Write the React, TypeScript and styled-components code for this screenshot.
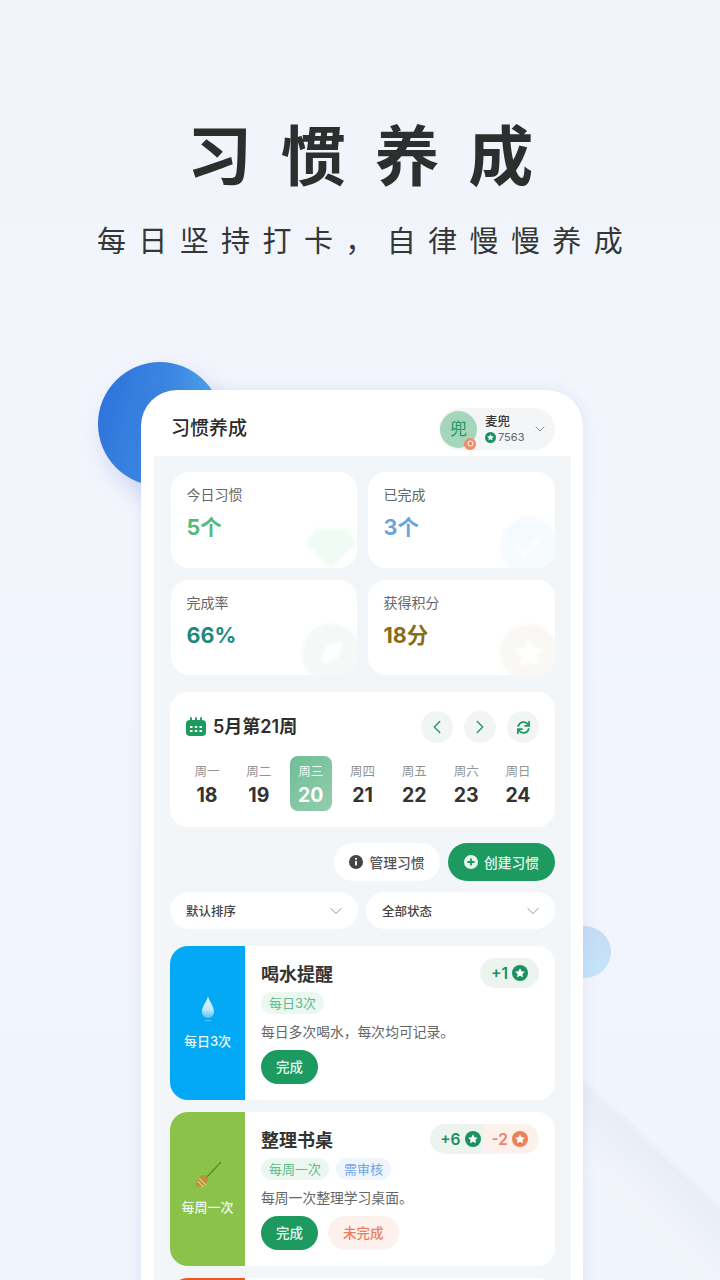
import React from 'react'
import styled, { createGlobalStyle } from 'styled-components'
import { ChevronDown, ChevronLeft, ChevronRight } from 'lucide-react'
import { FaSync } from 'react-icons/fa'

const GlobalStyle = createGlobalStyle`
  html, body {
    margin: 0;
    padding: 0;
    background: #f1f4fc;
  }
  * {
    box-sizing: border-box;
  }
`

const PageStyles = styled.div`
  position: relative;
  width: 720px;
  height: 1280px;
  overflow: hidden;
  padding-top: 122px;
  font-family: Inter, 'Noto Sans CJK SC', sans-serif;
  color: #333;
  background: linear-gradient(180deg, #f0f3f9 0, #f1f4fb 40px, #f2f5fc 45%, #f0f4fd 100%);
`

const HeroTitle = styled.h1`
  margin: 0;
  height: 70px;
  font-size: 65px;
  line-height: 70px;
  font-weight: 700;
  letter-spacing: 28.800px;
  text-align: center;
  padding-left: 29px;
  color: #2b2f2d;
  white-space: nowrap;
`

const HeroSub = styled.p`
  margin: 32px 0 0;
  font-size: 29px;
  line-height: 36px;
  font-weight: 400;
  letter-spacing: 12.400px;
  text-align: center;
  padding-left: 12px;
  color: #333836;
  white-space: nowrap;
`

const BigBall = styled.div`
  position: absolute;
  left: 98px;
  top: 362px;
  width: 124px;
  height: 124px;
  border-radius: 50%;
  background: linear-gradient(105deg, #2c70d9 0%, #3d88e3 50%, #5cb5ee 100%);
  box-shadow: 6px 12px 22px rgba(100, 110, 220, 0.22);
`

const SmallBall = styled.div`
  position: absolute;
  left: 557px;
  top: 926px;
  width: 54px;
  height: 52px;
  border-radius: 50%;
  background: linear-gradient(180deg, #c6dcf6 0%, #c4e4f9 100%);
`

const CornerFold = styled.div`
  position: absolute;
  left: 570px;
  top: 1080px;
  width: 150px;
  height: 200px;
  background: linear-gradient(222.8deg, rgba(232, 236, 246, 0) 36%, #e9edf6 39%, #f1f4fb 60%, rgba(241, 244, 251, 0) 78%);
`

const PhoneCard = styled.div`
  position: relative;
  width: 442px;
  height: 960px;
  margin: 130px 0 0 141px;
  padding: 0 12px 0 13px;
  background: #fff;
  border-radius: 36px 36px 0 0;
  box-shadow: 0 0 14px rgba(60, 90, 170, 0.1);
`

const AppHeader = styled.div`
  display: flex;
  align-items: center;
  justify-content: space-between;
  height: 66px;
  padding: 18px 16px 6px 17px;
`

const AppTitle = styled.div`
  font-size: 19px;
  line-height: 26px;
  font-weight: 500;
  color: #2a2a2a;
`

const UserChip = styled.div`
  display: flex;
  align-items: center;
  width: 116px;
  height: 42px;
  border-radius: 21px;
  background: #f3f5f6;
`

const Avatar = styled.div`
  position: relative;
  flex: none;
  width: 37px;
  height: 37px;
  margin-left: 1px;
  border-radius: 50%;
  background: #a5d6bb;
  color: #1d9a5c;
  font-size: 17px;
  line-height: 37px;
  text-align: center;
`

const AvatarBadge = styled.span`
  position: absolute;
  right: 1px;
  bottom: -2px;
  display: flex;
  align-items: center;
  justify-content: center;
  width: 12px;
  height: 12px;
  border-radius: 50%;
  background: #f28a64;
`

const UserInfo = styled.div`
  display: flex;
  flex-direction: column;
  margin: 1px 0 0 8px;
  flex: 1;
`

const UserName = styled.div`
  font-size: 12.5px;
  line-height: 16px;
  font-weight: 500;
  color: #333;
`

const UserPoints = styled.div`
  display: flex;
  align-items: center;
  gap: 2px;
  font-size: 11px;
  line-height: 15px;
  color: #666;
`

const ChipArrow = styled(ChevronDown)`
  margin-right: 7px;
  color: #888;
`

const Content = styled.div`
  height: 894px;
  padding: 16px 16px 0 16px;
  background: #f3f6f8;
`

const StatGrid = styled.div`
  display: grid;
  grid-template-columns: 186px 187px;
  grid-template-rows: 96px 95px;
  column-gap: 11px;
  row-gap: 12px;
  margin-left: 1px;
`

const StatTile = styled.div`
  position: relative;
  overflow: hidden;
  padding: 13px 15.500px;
  background: #fff;
  border-radius: 18px;
`

const StatLabel = styled.div`
  font-size: 14px;
  line-height: 20px;
  color: #666;
`

const StatValue = styled.div<{ $color: string }>`
  margin-top: 7px;
  font-size: 21.5px;
  line-height: 30px;
  font-weight: 700;
  color: ${({ $color }) => $color};
`

const StatDecor = styled.div<{ $bg: string; $fg: string }>`
  position: absolute;
  right: -3px;
  bottom: -7px;
  width: 58px;
  height: 58px;
  border-radius: 50%;
  display: flex;
  align-items: center;
  justify-content: center;
  filter: blur(1.500px);
  background: ${({ $bg }) => $bg};
  color: ${({ $fg }) => $fg};
`

const WeekCard = styled.div`
  margin-top: 17px;
  height: 135px;
  padding: 18px 16px 0 16px;
  background: #fff;
  border-radius: 18px;
`

const WeekHeader = styled.div`
  display: flex;
  align-items: center;
  height: 34px;
`

const WeekTitle = styled.div`
  flex: 1;
  margin-left: 7px;
  font-size: 18px;
  line-height: 26px;
  font-weight: 600;
  color: #2e2e2e;
`

const RoundButton = styled.div`
  display: flex;
  align-items: center;
  justify-content: center;
  width: 32px;
  height: 32px;
  margin-left: 11px;
  border-radius: 50%;
  background: #f1f5f3;
  color: #1f9a60;
`

const DaysRow = styled.div`
  display: grid;
  grid-template-columns: repeat(7, 42px);
  justify-content: space-between;
  margin-top: 12px;
`

const DayCell = styled.div<{ $active?: boolean }>`
  height: 55px;
  padding-top: 8px;
  border-radius: 8px;
  text-align: center;
  background: ${({ $active }) => ($active ? 'linear-gradient(135deg, #6fbe95, #93cdae)' : 'transparent')};
  color: ${({ $active }) => ($active ? '#fff' : '#333')};
`

const DayName = styled.div<{ $active?: boolean }>`
  font-size: 12.5px;
  line-height: 16px;
  color: ${({ $active }) => ($active ? '#eef8f2' : '#939393')};
`

const DayNum = styled.div`
  margin-top: 2px;
  font-size: 19.500px;
  line-height: 26px;
  font-weight: 700;
`

const ActionRow = styled.div`
  display: flex;
  justify-content: flex-end;
  gap: 8px;
  margin-top: 16px;
`

const ActionButton = styled.div<{ $primary?: boolean }>`
  display: flex;
  align-items: center;
  justify-content: center;
  gap: 6px;
  height: 38px;
  border-radius: 19px;
  font-size: 13.75px;
  font-weight: 500;
  background: ${({ $primary }) => ($primary ? '#1c9a5f' : '#fff')};
  color: ${({ $primary }) => ($primary ? '#e8f6ee' : '#555')};
  width: ${({ $primary }) => ($primary ? '107px' : '106px')};
`

const FilterRow = styled.div`
  display: grid;
  grid-template-columns: 188px 189px;
  justify-content: space-between;
  margin-top: 11px;
`

const FilterSelect = styled.div`
  display: flex;
  align-items: center;
  justify-content: space-between;
  height: 37px;
  padding: 0 12px 0 16px;
  border-radius: 19px;
  background: #fff;
  font-size: 12.5px;
  font-weight: 500;
  color: #444;
`

const HabitList = styled.div`
  display: flex;
  flex-direction: column;
  gap: 12px;
  margin-top: 17px;
`

const HabitCard = styled.div`
  display: flex;
  height: 154px;
  background: #fff;
  border-radius: 18px;
  overflow: hidden;
  flex: none;
`

const HabitSide = styled.div<{ $color: string }>`
  display: flex;
  flex-direction: column;
  align-items: center;
  flex: none;
  width: 75px;
  padding-top: 49px;
  background: ${({ $color }) => $color};
`

const SideIcon = styled.div`
  display: flex;
  align-items: center;
  justify-content: center;
  height: 28px;
`

const SideLabel = styled.div`
  margin-top: 9px;
  font-size: 13px;
  line-height: 18px;
  font-weight: 500;
  color: #f0f8f4;
`

const HabitBody = styled.div`
  position: relative;
  flex: 1;
  padding: 15px 16px 0 16px;
`

const HabitName = styled.div`
  font-size: 18px;
  line-height: 28px;
  font-weight: 600;
  color: #333;
`

const TagRow = styled.div`
  display: flex;
  gap: 7px;
  margin-top: 3px;
`

const Tag = styled.span<{ $blue?: boolean }>`
  height: 22px;
  padding: 0 8px;
  border-radius: 11px;
  font-size: 13px;
  line-height: 22px;
  background: ${({ $blue }) => ($blue ? '#eff5fd' : '#edf7f1')};
  color: ${({ $blue }) => ($blue ? '#6fa6e6' : '#5cbb88')};
`

const HabitDesc = styled.div`
  margin-top: 8px;
  font-size: 13.800px;
  line-height: 20px;
  color: #666;
`

const HabitActions = styled.div`
  display: flex;
  gap: 10px;
  margin-top: 8px;
`

const DoneButton = styled.div<{ $miss?: boolean }>`
  height: 34px;
  padding: 0 15px;
  border-radius: 17px;
  font-size: 13.5px;
  line-height: 34px;
  font-weight: 500;
  background: ${({ $miss }) => ($miss ? '#fdf1ed' : '#1c9a5f')};
  color: ${({ $miss }) => ($miss ? '#ee7f5c' : '#e8f6ee')};
`

const PointsPill = styled.div`
  position: absolute;
  top: 12px;
  right: 16px;
  display: flex;
  height: 30px;
  border-radius: 15px;
  overflow: hidden;
`

const PointsPart = styled.div<{ $minus?: boolean; $joined?: boolean }>`
  display: flex;
  align-items: center;
  gap: 4px;
  padding: ${({ $minus, $joined }) => ($joined ? '0 2px 0 10px' : $minus ? '0 11px 0 9px' : '0 11px')};
  font-size: 15.5px;
  font-weight: 600;
  background: ${({ $minus }) => ($minus ? '#fdf1ed' : '#ebf4ef')};
  color: ${({ $minus }) => ($minus ? '#ea8468' : '#1c8d5b')};
`

const StarBadge: React.FC<{ size?: number; color?: string }> = ({ size = 16, color = '#1c9060' }) => (
  <svg width={size} height={size} viewBox="0 0 16 16" style={{ flex: 'none' }}>
    <circle cx="8" cy="8" r="8" fill={color} />
    <path d="M8 3.200l1.500 3 3.300.5-2.400 2.300.6 3.300L8 10.700l-3 1.600.6-3.300-2.400-2.300 3.300-.5z" fill="#fff" />
  </svg>
)

const CalendarIcon = () => (
  <svg width="20" height="20" viewBox="0 0 20 20">
    <rect x="0" y="3" width="20" height="16" rx="4" fill="#1c9a5f" />
    <path d="M5 1v4.500M10 1v4.500M15 1v4.500" stroke="#1c9a5f" strokeWidth="1.800" strokeLinecap="round" />
    <path d="M4 10h2.500M8.800 10h2.500M13.500 10h2.500M4 14h2.500M8.800 14h2.500M13.500 14h2.500" stroke="#fff" strokeWidth="1.800" />
  </svg>
)

const InfoIcon = () => (
  <svg width="14" height="14" viewBox="0 0 14 14">
    <circle cx="7" cy="7" r="7" fill="#444" />
    <path d="M7 6v4.500" stroke="#fff" strokeWidth="1.800" />
    <circle cx="7" cy="3.800" r="1.100" fill="#fff" />
  </svg>
)

const PlusIcon = () => (
  <svg width="14" height="14" viewBox="0 0 14 14">
    <circle cx="7" cy="7" r="7" fill="#e8f6ee" />
    <path d="M7 3.400v7.200M3.400 7h7.200" stroke="#1c9a5f" strokeWidth="1.800" />
  </svg>
)

const DropIcon = () => (
  <svg width="14" height="26" viewBox="0 0 14 26">
    <defs>
      <linearGradient id="drop" x1="0" y1="0" x2="0" y2="1">
        <stop offset="0" stopColor="#e6f6fe" />
        <stop offset="0.6" stopColor="#bfe7fb" />
        <stop offset="1" stopColor="#58c3f6" />
      </linearGradient>
    </defs>
    <path d="M7 0.500C8.500 6 13 10 13 16a6 6 0 0 1-12 0C1 10 5.500 6 7 0.500z" fill="url(#drop)" />
    <path d="M4 24.500h6" stroke="#5cc6f7" strokeWidth="1" />
  </svg>
)

const BroomIcon = () => (
  <svg width="30" height="30" viewBox="0 0 30 30">
    <path d="M12 19L28 2" stroke="#5f8a2a" strokeWidth="1.400" />
    <path d="M3 24c0-4 4-9 8-9 2 0 4 2 4 4 0 4-5 8-9 8-2 0-3-1-3-3z" fill="#b8923e" />
    <path d="M6 18l7 7M4.500 21l6 6" stroke="#e0c777" strokeWidth="1.400" />
  </svg>
)

const HeartDecor = () => (
  <svg width="54" height="46" viewBox="0 0 24 20">
    <path d="M12 20L1 9 5 2h14l4 7z" fill="currentColor" />
  </svg>
)

const CheckDecor = () => (
  <svg width="34" height="26" viewBox="0 0 34 26">
    <path d="M3 13l9 9L31 3" stroke="currentColor" strokeWidth="5" fill="none" />
  </svg>
)

const LeafDecor = () => (
  <svg width="26" height="26" viewBox="0 0 30 30">
    <path d="M28 2C14 2 3 9 4 26 20 28 28 16 28 2z" fill="currentColor" />
  </svg>
)

const StarDecor = () => (
  <svg width="36" height="36" viewBox="0 0 24 24">
    <path d="M12 2l3 6.500 7 .9-5.100 4.800 1.300 7L12 17.800 5.800 21.200l1.300-7L2 9.400l7-.9z" fill="currentColor" />
  </svg>
)

const weekDays = [
  { name: '周一', num: 18 },
  { name: '周二', num: 19 },
  { name: '周三', num: 20, active: true },
  { name: '周四', num: 21 },
  { name: '周五', num: 22 },
  { name: '周六', num: 23 },
  { name: '周日', num: 24 },
]

export default function App() {
  return (
    <PageStyles>
      <GlobalStyle />
      <CornerFold />
      <SmallBall />
      <BigBall />

      <HeroTitle>习惯养成</HeroTitle>
      <HeroSub>每日坚持打卡，自律慢慢养成</HeroSub>

      <PhoneCard>
        <AppHeader>
          <AppTitle>习惯养成</AppTitle>
          <UserChip>
            <Avatar>
              兜
              <AvatarBadge>
                <svg width="7" height="7" viewBox="0 0 7 7">
                  <circle cx="3.500" cy="3.500" r="2.500" fill="none" stroke="#fff" strokeWidth="1" />
                </svg>
              </AvatarBadge>
            </Avatar>
            <UserInfo>
              <UserName>麦兜</UserName>
              <UserPoints>
                <StarBadge size={11} />
                7563
              </UserPoints>
            </UserInfo>
            <ChipArrow size={16} strokeWidth={1.4} />
          </UserChip>
        </AppHeader>

        <Content>
          <StatGrid>
            <StatTile>
              <StatLabel>今日习惯</StatLabel>
              <StatValue $color="#55b97f">5个</StatValue>
              <StatDecor $bg="transparent" $fg="#f1fbf5">
                <HeartDecor />
              </StatDecor>
            </StatTile>
            <StatTile>
              <StatLabel>已完成</StatLabel>
              <StatValue $color="#6aa5dd">3个</StatValue>
              <StatDecor $bg="#f5fafd" $fg="#fbfdfe">
                <CheckDecor />
              </StatDecor>
            </StatTile>
            <StatTile>
              <StatLabel>完成率</StatLabel>
              <StatValue $color="#1e8a7a">66%</StatValue>
              <StatDecor $bg="#f4f8f7" $fg="#ffffff">
                <LeafDecor />
              </StatDecor>
            </StatTile>
            <StatTile>
              <StatLabel>获得积分</StatLabel>
              <StatValue $color="#8a6d14">18分</StatValue>
              <StatDecor $bg="#faf8f5" $fg="#ffffff">
                <StarDecor />
              </StatDecor>
            </StatTile>
          </StatGrid>

          <WeekCard>
            <WeekHeader>
              <CalendarIcon />
              <WeekTitle>5月第21周</WeekTitle>
              <RoundButton>
                <ChevronLeft size={22} strokeWidth={1.5} />
              </RoundButton>
              <RoundButton>
                <ChevronRight size={22} strokeWidth={1.5} />
              </RoundButton>
              <RoundButton>
                <FaSync size={13} />
              </RoundButton>
            </WeekHeader>
            <DaysRow>
              {weekDays.map((day) => (
                <DayCell key={day.num} $active={day.active}>
                  <DayName $active={day.active}>{day.name}</DayName>
                  <DayNum>{day.num}</DayNum>
                </DayCell>
              ))}
            </DaysRow>
          </WeekCard>

          <ActionRow>
            <ActionButton>
              <InfoIcon />
              管理习惯
            </ActionButton>
            <ActionButton $primary>
              <PlusIcon />
              创建习惯
            </ActionButton>
          </ActionRow>

          <FilterRow>
            <FilterSelect>
              默认排序
              <ChevronDown size={20} strokeWidth={1.1} color="#888" />
            </FilterSelect>
            <FilterSelect>
              全部状态
              <ChevronDown size={20} strokeWidth={1.1} color="#888" />
            </FilterSelect>
          </FilterRow>

          <HabitList>
            <HabitCard>
              <HabitSide $color="#03a9f4">
                <SideIcon>
                  <DropIcon />
                </SideIcon>
                <SideLabel>每日3次</SideLabel>
              </HabitSide>
              <HabitBody>
                <HabitName>喝水提醒</HabitName>
                <PointsPill>
                  <PointsPart>
                    +1
                    <StarBadge />
                  </PointsPart>
                </PointsPill>
                <TagRow>
                  <Tag>每日3次</Tag>
                </TagRow>
                <HabitDesc>每日多次喝水，每次均可记录。</HabitDesc>
                <HabitActions>
                  <DoneButton>完成</DoneButton>
                </HabitActions>
              </HabitBody>
            </HabitCard>

            <HabitCard>
              <HabitSide $color="#8bc34a">
                <SideIcon>
                  <BroomIcon />
                </SideIcon>
                <SideLabel>每周一次</SideLabel>
              </HabitSide>
              <HabitBody>
                <HabitName>整理书桌</HabitName>
                <PointsPill>
                  <PointsPart $joined>
                    +6
                    <StarBadge />
                  </PointsPart>
                  <PointsPart $minus>
                    -2
                    <StarBadge color="#ee8058" />
                  </PointsPart>
                </PointsPill>
                <TagRow>
                  <Tag>每周一次</Tag>
                  <Tag $blue>需审核</Tag>
                </TagRow>
                <HabitDesc>每周一次整理学习桌面。</HabitDesc>
                <HabitActions>
                  <DoneButton>完成</DoneButton>
                  <DoneButton $miss>未完成</DoneButton>
                </HabitActions>
              </HabitBody>
            </HabitCard>

            <HabitCard>
              <HabitSide $color="#f4511e" />
              <HabitBody />
            </HabitCard>
          </HabitList>
        </Content>
      </PhoneCard>
    </PageStyles>
  )
}
